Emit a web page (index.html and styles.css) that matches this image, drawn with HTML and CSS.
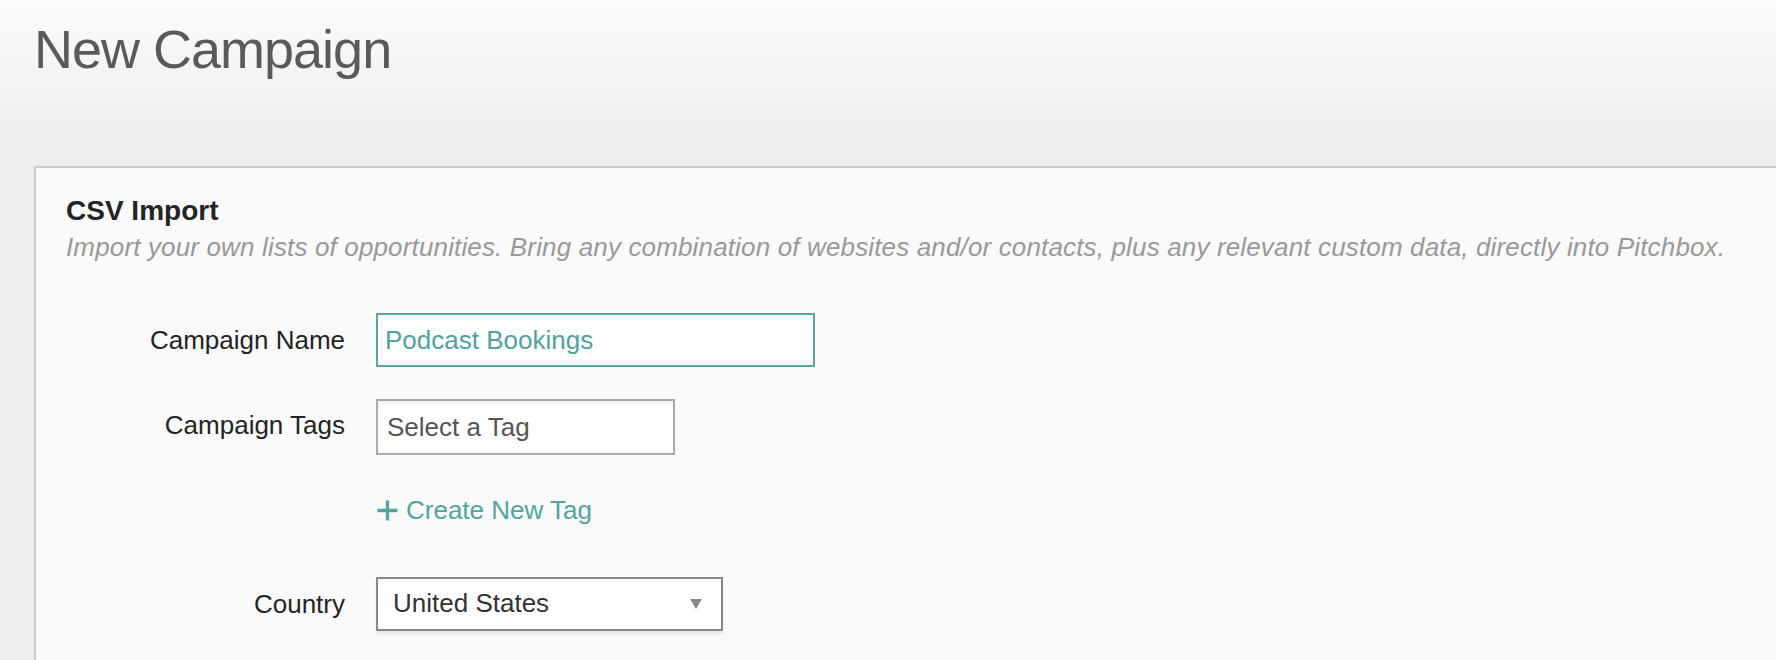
FILE: index.html
```html
<!DOCTYPE html>
<html lang="en">
<head>
<meta charset="utf-8">
<title>New Campaign</title>
<link rel="stylesheet" href="styles.css">
</head>
<body>
<header class="header">
  <h1 class="title">New Campaign</h1>
</header>
<section class="panel">
  <h2 class="panel-title">CSV Import</h2>
  <p class="panel-desc">Import your own lists of opportunities. Bring any combination of websites and/or contacts, plus any relevant custom data, directly into Pitchbox.</p>
  <div class="form">
    <div class="row row-name">
      <label class="label">Campaign Name</label>
      <div class="field field-name">Podcast Bookings</div>
    </div>
    <div class="row row-tags">
      <label class="label">Campaign Tags</label>
      <div class="field field-tags">Select a Tag</div>
    </div>
    <div class="row row-create">
      <span class="label"></span>
      <a class="create-link" href="#">
        <svg class="plus" width="21" height="21" viewBox="0 0 21 21" aria-hidden="true">
          <path d="M10.5 0.5V20.5M0.5 10.5H20.5" stroke="#52a5a1" stroke-width="3.4" fill="none"/>
        </svg>
        <span>Create New Tag</span>
      </a>
    </div>
    <div class="row row-country">
      <label class="label">Country</label>
      <div class="field field-country">
        <span>United States</span>
        <svg class="caret" width="12" height="10" viewBox="0 0 12 10" aria-hidden="true">
          <path d="M0 0H12L6 10Z" fill="#888"/>
        </svg>
      </div>
    </div>
  </div>
</section>
</body>
</html>
```

FILE: styles.css
```css
html, body {
  margin: 0;
  padding: 0;
}

body {
  box-sizing: border-box;
  height: 660px;
  overflow: hidden;
  display: flex;
  flex-direction: column;
  background: linear-gradient(to bottom, #fbfbfb 0px, #eeeeee 140px, #eeeeee 100%);
  background-color: #eeeeee;
  font-family: "Liberation Sans", Arial, Helvetica, sans-serif;
}

.header {
  box-sizing: border-box;
  flex: none;
  height: 166px;
  padding: 18px 0 0 34px;
}

.title {
  margin: 0;
  font-size: 54px;
  line-height: 62px;
  font-weight: 300;
  letter-spacing: -1px;
  color: #5a5a5a;
}

.panel {
  flex: 1;
  min-height: 0;
  margin-left: 34px;
  margin-right: -40px;
  border-top: 2px solid #cccccc;
  border-left: 2px solid #cccccc;
  background: #fafafa;
  padding: 27px 30px 0 30px;
}

.panel-title {
  margin: 0;
  font-size: 28px;
  line-height: 32px;
  font-weight: bold;
  color: #222426;
}

.panel-desc {
  margin: 5px 0 0 0;
  font-size: 26px;
  line-height: 30px;
  font-style: italic;
  letter-spacing: 0.15px;
  color: #999999;
  white-space: nowrap;
}

.form {
  margin-top: 51px;
  display: flex;
  flex-direction: column;
}

.row {
  display: flex;
  align-items: center;
  column-gap: 31px;
}

.row-tags {
  margin-top: 32px;
}

.row-tags .label {
  margin-top: -4px;
}

.row-create {
  margin-top: 40px;
}

.row-country {
  margin-top: 52px;
}

.label {
  width: 279px;
  flex: none;
  text-align: right;
  font-size: 26px;
  color: #222426;
}

.field {
  box-sizing: border-box;
  background: #ffffff;
  font-size: 26px;
  display: flex;
  align-items: center;
}

.field-name {
  width: 439px;
  height: 54px;
  border: 2px solid #56a7a3;
  padding-left: 7px;
  color: #4fa29e;
}

.field-tags {
  width: 299px;
  height: 56px;
  border: 2px solid #aaaaaa;
  box-shadow: inset 0 3px 3px rgba(0, 0, 0, 0.06);
  padding-left: 9px;
  color: #555555;
}

.field-country {
  width: 347px;
  height: 54px;
  border: 2px solid #888888;
  box-shadow: 0 3px 2px rgba(0, 0, 0, 0.08);
  padding: 0 19px 2px 15px;
  color: #333333;
  justify-content: space-between;
}

.caret {
  flex: none;
  margin-top: 2px;
}

.create-link {
  display: flex;
  align-items: center;
  gap: 8px;
  font-size: 26px;
  line-height: 30px;
  color: #52a5a1;
  text-decoration: none;
  margin-left: 1px;
}

.plus {
  flex: none;
}
```
